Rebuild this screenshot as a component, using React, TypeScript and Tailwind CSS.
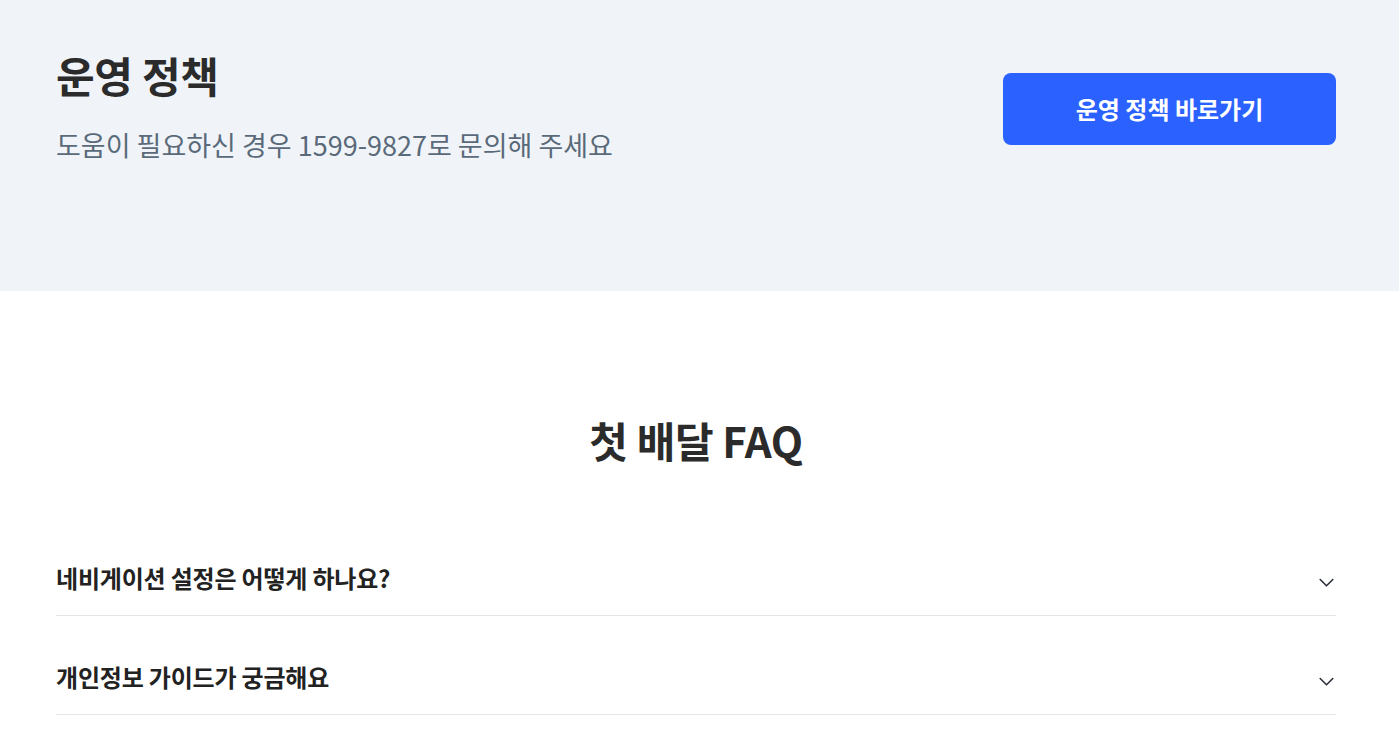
import React from 'react';

const faqs = ['네비게이션 설정은 어떻게 하나요?', '개인정보 가이드가 궁금해요'];

const Chevron: React.FC = () => (
  <svg width="15" height="10" viewBox="0 0 15 10" fill="none" className="shrink-0 mt-[10px] mr-[2px]">
    <path d="M1.2 1.5l6.3 6.3 6.3-6.3" stroke="#2a2f38" strokeWidth="1.6" strokeLinecap="round" strokeLinejoin="round" />
  </svg>
);

const App: React.FC = () => {
  return (
    <div className="min-h-screen bg-white font-['Noto_Sans_CJK_KR','Noto_Sans',sans-serif] text-[#2b2b2b]">
      <section className="h-[291px] bg-[#f0f4f8]">
        <div className="ml-[56px] w-[1280px] pt-[47px] flex justify-between items-start">
          <div>
            <h1 className="text-[42px] leading-[56px] font-bold tracking-[-0.3px]">운영 정책</h1>
            <p className="mt-[22px] text-[27px] leading-[40px] text-[#5a6a7a]">
              도움이 필요하신 경우 1599-9827로 문의해 주세요
            </p>
          </div>
          <button className="mt-[26px] w-[333px] h-[72px] rounded-[8px] bg-[#2b62ff] text-white text-[24px] font-bold">
            운영 정책 바로가기
          </button>
        </div>
      </section>

      <section className="ml-[56px] w-[1280px] pt-[120px]">
        <h2 className="text-center text-[42px] leading-[58px] font-bold tracking-[-0.4px]">첫 배달 FAQ</h2>
        <ul className="mt-[48px]">
          {faqs.map((q) => (
            <li key={q} className="flex items-center justify-between pt-[44px] pb-[20px] border-b border-[#e5e5e5]">
              <span className="text-[24px] leading-[34px] font-bold text-[#222] tracking-[-0.2px]">{q}</span>
              <Chevron />
            </li>
          ))}
        </ul>
      </section>
    </div>
  );
};

export default App;
